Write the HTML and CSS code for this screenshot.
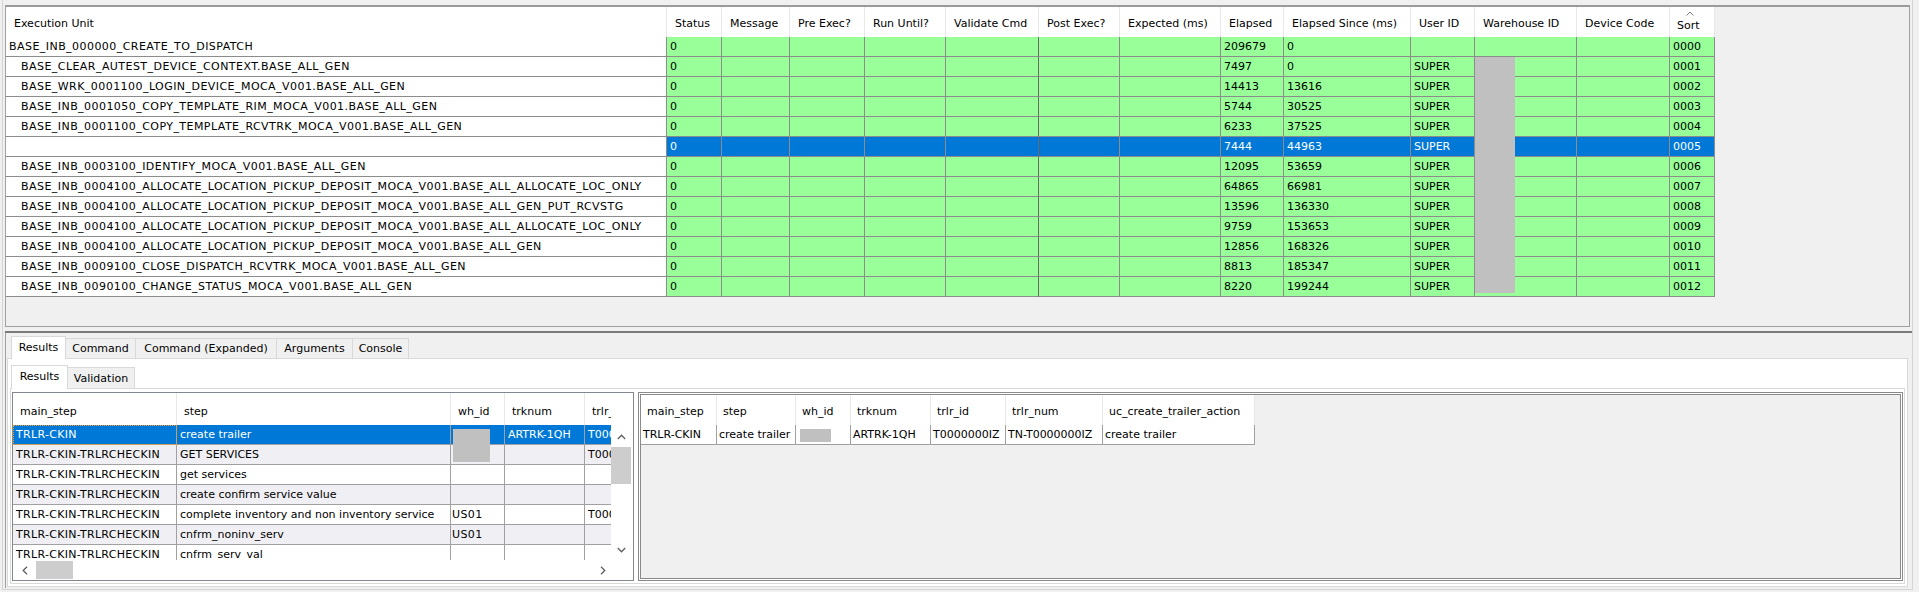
FILE: index.html
```html
<!DOCTYPE html>
<html>
<head>
<meta charset="utf-8">
<title>Execution Units</title>
<link rel="stylesheet" href="styles.css">
</head>
<body>
<div class="window">
<div class="frame">

  <div class="top-panel">
    <div class="trow thead">
      <div class="th">Execution Unit</div>
      <div class="th">Status</div>
      <div class="th">Message</div>
      <div class="th">Pre Exec?</div>
      <div class="th">Run Until?</div>
      <div class="th">Validate Cmd</div>
      <div class="th">Post Exec?</div>
      <div class="th">Expected (ms)</div>
      <div class="th">Elapsed</div>
      <div class="th">Elapsed Since (ms)</div>
      <div class="th">User ID</div>
      <div class="th">Warehouse ID</div>
      <div class="th">Device Code</div>
      <div class="th th-sort"><span class="caret"><svg width="8" height="5" viewBox="0 0 8 5"><polyline points="0.5,4.5 4,1 7.5,4.5" fill="none" stroke="#7a7a7a" stroke-width="1"/></svg></span><span>Sort</span></div>
    </div>

    <div class="trow data">
      <div class="td exec root">BASE_INB_000000_CREATE_TO_DISPATCH</div>
      <div class="td">0</div><div class="td"></div><div class="td"></div><div class="td"></div><div class="td"></div><div class="td"></div><div class="td"></div>
      <div class="td">209679</div><div class="td">0</div><div class="td"></div><div class="td"></div><div class="td"></div><div class="td">0000</div>
    </div>
    <div class="trow data">
      <div class="td exec">BASE_CLEAR_AUTEST_DEVICE_CONTEXT.BASE_ALL_GEN</div>
      <div class="td">0</div><div class="td"></div><div class="td"></div><div class="td"></div><div class="td"></div><div class="td"></div><div class="td"></div>
      <div class="td">7497</div><div class="td">0</div><div class="td">SUPER</div><div class="td"></div><div class="td"></div><div class="td">0001</div>
    </div>
    <div class="trow data">
      <div class="td exec">BASE_WRK_0001100_LOGIN_DEVICE_MOCA_V001.BASE_ALL_GEN</div>
      <div class="td">0</div><div class="td"></div><div class="td"></div><div class="td"></div><div class="td"></div><div class="td"></div><div class="td"></div>
      <div class="td">14413</div><div class="td">13616</div><div class="td">SUPER</div><div class="td"></div><div class="td"></div><div class="td">0002</div>
    </div>
    <div class="trow data">
      <div class="td exec">BASE_INB_0001050_COPY_TEMPLATE_RIM_MOCA_V001.BASE_ALL_GEN</div>
      <div class="td">0</div><div class="td"></div><div class="td"></div><div class="td"></div><div class="td"></div><div class="td"></div><div class="td"></div>
      <div class="td">5744</div><div class="td">30525</div><div class="td">SUPER</div><div class="td"></div><div class="td"></div><div class="td">0003</div>
    </div>
    <div class="trow data">
      <div class="td exec">BASE_INB_0001100_COPY_TEMPLATE_RCVTRK_MOCA_V001.BASE_ALL_GEN</div>
      <div class="td">0</div><div class="td"></div><div class="td"></div><div class="td"></div><div class="td"></div><div class="td"></div><div class="td"></div>
      <div class="td">6233</div><div class="td">37525</div><div class="td">SUPER</div><div class="td"></div><div class="td"></div><div class="td">0004</div>
    </div>
    <div class="trow data sel">
      <div class="td exec"></div>
      <div class="td">0</div><div class="td"></div><div class="td"></div><div class="td"></div><div class="td"></div><div class="td"></div><div class="td"></div>
      <div class="td">7444</div><div class="td">44963</div><div class="td">SUPER</div><div class="td"></div><div class="td"></div><div class="td">0005</div>
    </div>
    <div class="trow data">
      <div class="td exec">BASE_INB_0003100_IDENTIFY_MOCA_V001.BASE_ALL_GEN</div>
      <div class="td">0</div><div class="td"></div><div class="td"></div><div class="td"></div><div class="td"></div><div class="td"></div><div class="td"></div>
      <div class="td">12095</div><div class="td">53659</div><div class="td">SUPER</div><div class="td"></div><div class="td"></div><div class="td">0006</div>
    </div>
    <div class="trow data">
      <div class="td exec">BASE_INB_0004100_ALLOCATE_LOCATION_PICKUP_DEPOSIT_MOCA_V001.BASE_ALL_ALLOCATE_LOC_ONLY</div>
      <div class="td">0</div><div class="td"></div><div class="td"></div><div class="td"></div><div class="td"></div><div class="td"></div><div class="td"></div>
      <div class="td">64865</div><div class="td">66981</div><div class="td">SUPER</div><div class="td"></div><div class="td"></div><div class="td">0007</div>
    </div>
    <div class="trow data">
      <div class="td exec">BASE_INB_0004100_ALLOCATE_LOCATION_PICKUP_DEPOSIT_MOCA_V001.BASE_ALL_GEN_PUT_RCVSTG</div>
      <div class="td">0</div><div class="td"></div><div class="td"></div><div class="td"></div><div class="td"></div><div class="td"></div><div class="td"></div>
      <div class="td">13596</div><div class="td">136330</div><div class="td">SUPER</div><div class="td"></div><div class="td"></div><div class="td">0008</div>
    </div>
    <div class="trow data">
      <div class="td exec">BASE_INB_0004100_ALLOCATE_LOCATION_PICKUP_DEPOSIT_MOCA_V001.BASE_ALL_ALLOCATE_LOC_ONLY</div>
      <div class="td">0</div><div class="td"></div><div class="td"></div><div class="td"></div><div class="td"></div><div class="td"></div><div class="td"></div>
      <div class="td">9759</div><div class="td">153653</div><div class="td">SUPER</div><div class="td"></div><div class="td"></div><div class="td">0009</div>
    </div>
    <div class="trow data">
      <div class="td exec">BASE_INB_0004100_ALLOCATE_LOCATION_PICKUP_DEPOSIT_MOCA_V001.BASE_ALL_GEN</div>
      <div class="td">0</div><div class="td"></div><div class="td"></div><div class="td"></div><div class="td"></div><div class="td"></div><div class="td"></div>
      <div class="td">12856</div><div class="td">168326</div><div class="td">SUPER</div><div class="td"></div><div class="td"></div><div class="td">0010</div>
    </div>
    <div class="trow data">
      <div class="td exec">BASE_INB_0009100_CLOSE_DISPATCH_RCVTRK_MOCA_V001.BASE_ALL_GEN</div>
      <div class="td">0</div><div class="td"></div><div class="td"></div><div class="td"></div><div class="td"></div><div class="td"></div><div class="td"></div>
      <div class="td">8813</div><div class="td">185347</div><div class="td">SUPER</div><div class="td"></div><div class="td"></div><div class="td">0011</div>
    </div>
    <div class="trow data">
      <div class="td exec">BASE_INB_0090100_CHANGE_STATUS_MOCA_V001.BASE_ALL_GEN</div>
      <div class="td">0</div><div class="td"></div><div class="td"></div><div class="td"></div><div class="td"></div><div class="td"></div><div class="td"></div>
      <div class="td">8220</div><div class="td">199244</div><div class="td">SUPER</div><div class="td"></div><div class="td"></div><div class="td">0012</div>
    </div>

    <div class="redact redact-top"></div>
  </div>

  <div class="splitter"></div>

  <div class="bottom">
    <div class="tabstrip">
      <div class="tab active tab-results">Results</div>
      <div class="tab tab-command">Command</div>
      <div class="tab tab-expanded">Command (Expanded)</div>
      <div class="tab tab-arguments">Arguments</div>
      <div class="tab tab-console">Console</div>
    </div>

    <div class="tabpage">
      <div class="subtabstrip">
        <div class="tab sub active subtab-results">Results</div>
        <div class="tab sub subtab-validation">Validation</div>
      </div>

      <div class="subpage">
        <div class="lpanel">
          <div class="lbody">
            <div class="lview">
              <div class="lrow lhead">
                <div class="lh">main_step</div>
                <div class="lh">step</div>
                <div class="lh">wh_id</div>
                <div class="lh">trknum</div>
                <div class="lh">trlr_id</div>
              </div>
              <div class="lrow lsel">
                <div class="lc caps focus">TRLR-CKIN</div>
                <div class="lc">create trailer</div>
                <div class="lc"></div>
                <div class="lc">ARTRK-1QH</div>
                <div class="lc">T0000000IZ</div>
              </div>
              <div class="lrow alt">
                <div class="lc caps">TRLR-CKIN-TRLRCHECKIN</div>
                <div class="lc">GET SERVICES</div>
                <div class="lc"></div>
                <div class="lc"></div>
                <div class="lc">T0000000IZ</div>
              </div>
              <div class="lrow">
                <div class="lc caps">TRLR-CKIN-TRLRCHECKIN</div>
                <div class="lc">get services</div>
                <div class="lc"></div>
                <div class="lc"></div>
                <div class="lc"></div>
              </div>
              <div class="lrow alt">
                <div class="lc caps">TRLR-CKIN-TRLRCHECKIN</div>
                <div class="lc">create confirm service value</div>
                <div class="lc"></div>
                <div class="lc"></div>
                <div class="lc"></div>
              </div>
              <div class="lrow">
                <div class="lc caps">TRLR-CKIN-TRLRCHECKIN</div>
                <div class="lc">complete inventory and non inventory service</div>
                <div class="lc tight">US01</div>
                <div class="lc"></div>
                <div class="lc">T0000000IZ</div>
              </div>
              <div class="lrow alt">
                <div class="lc caps">TRLR-CKIN-TRLRCHECKIN</div>
                <div class="lc">cnfrm_noninv_serv</div>
                <div class="lc tight">US01</div>
                <div class="lc"></div>
                <div class="lc"></div>
              </div>
              <div class="lrow">
                <div class="lc caps">TRLR-CKIN-TRLRCHECKIN</div>
                <div class="lc">cnfrm_serv_val</div>
                <div class="lc"></div>
                <div class="lc"></div>
                <div class="lc"></div>
              </div>
              <div class="redact redact-left"></div>
            </div>
            <div class="vscroll">
              <div class="vs-head"></div>
              <div class="vs-track">
                <div class="vs-arrow"><svg width="9" height="6" viewBox="0 0 9 6"><polyline points="0.8,5 4.5,1.2 8.2,5" fill="none" stroke="#606060" stroke-width="1.3"/></svg></div>
                <div class="vs-thumb"></div>
                <div class="vs-fill"></div>
                <div class="vs-arrow"><svg width="9" height="6" viewBox="0 0 9 6"><polyline points="0.8,1 4.5,4.8 8.2,1" fill="none" stroke="#606060" stroke-width="1.3"/></svg></div>
              </div>
            </div>
          </div>
          <div class="hscroll">
            <div class="hs-arrow"><svg width="6" height="9" viewBox="0 0 6 9"><polyline points="5,0.8 1.2,4.5 5,8.2" fill="none" stroke="#606060" stroke-width="1.3"/></svg></div>
            <div class="hs-thumb"></div>
            <div class="hs-fill"></div>
            <div class="hs-arrow"><svg width="6" height="9" viewBox="0 0 6 9"><polyline points="1,0.8 4.8,4.5 1,8.2" fill="none" stroke="#606060" stroke-width="1.3"/></svg></div>
            <div class="hs-corner"></div>
          </div>
        </div>

        <div class="rpanel">
          <div class="rp-inner">
            <div class="rrow rhead">
              <div class="rh">main_step</div>
              <div class="rh">step</div>
              <div class="rh">wh_id</div>
              <div class="rh">trknum</div>
              <div class="rh">trlr_id</div>
              <div class="rh">trlr_num</div>
              <div class="rh">uc_create_trailer_action</div>
            </div>
            <div class="rrow">
              <div class="rc">TRLR-CKIN</div>
              <div class="rc">create trailer</div>
              <div class="rc"></div>
              <div class="rc">ARTRK-1QH</div>
              <div class="rc">T0000000IZ</div>
              <div class="rc">TN-T0000000IZ</div>
              <div class="rc">create trailer</div>
            </div>
            <div class="redact redact-right"></div>
          </div>
        </div>
      </div>
    </div>
  </div>

</div>
</div>
</body>
</html>
```

FILE: styles.css
```css
* { box-sizing: border-box; }
html, body { margin: 0; padding: 0; }
body {
  background: #f0f0f0;
  font-family: "DejaVu Sans", "Liberation Sans", sans-serif;
  font-size: 11px;
  color: #000;
}

.window {
  width: 1919px;
  height: 592px;
  padding: 0 6px 0 2px;
  overflow: hidden;
}
.frame {
  height: 590px;
  padding: 5px 2px 1px 2px;
  border-left: 1px solid #d4d4d4;
  border-right: 1px solid #d4d4d4;
  border-bottom: 1px solid #d4d4d4;
  display: flex;
  flex-direction: column;
}

/* ---------- top grid ---------- */
.top-panel {
  position: relative;
  flex: none;
  height: 322px;
  border: 1px solid #a0a0a0;
  border-top: 2px solid #9a9a9a;
  background: #f0f0f0;
  overflow: hidden;
}
.trow {
  display: grid;
  grid-template-columns: 661px 55px 68px 75px 81px 93px 81px 101px 63px 127px 64px 102px 93px 45px;
  height: 20px;
}
.thead { height: 30px; }
.th {
  background: #fff;
  border-right: 1px solid #e8e8e8;
  padding: 4px 0 0 8px;
  line-height: 26px;
  white-space: nowrap;
  overflow: hidden;
}
.th-sort {
  padding: 0 0 0 7px;
  display: flex;
  flex-direction: column;
  line-height: 20px;
}
.caret {
  height: 9px;
  display: flex;
  align-items: flex-end;
  padding-left: 9px;
}
.td {
  background: #99ff99;
  border-right: 1px solid #8c8c8c;
  border-bottom: 1px solid #8c8c8c;
  padding: 0 3px;
  line-height: 19px;
  white-space: nowrap;
  overflow: hidden;
}
.data .td:nth-child(6) { border-right-color: #6a6a6a; }
.td.exec {
  background: #fff;
  padding-left: 15px;
  letter-spacing: 0.45px;
}
.td.exec.root { padding-left: 3px; }
.sel .td { background: #0078d7; color: #fff; }
.sel .td.exec { background: #fff; }

.redact { position: absolute; background: #c0c0c0; }
.redact-top { left: 1469px; top: 50px; width: 40px; height: 236px; }

.splitter {
  flex: none;
  height: 2px;
  margin: 4px -2px 0 0;
  background: #7a7a7a;
}

/* ---------- bottom / tabs ---------- */
.bottom {
  flex: 1;
  border-left: 1px solid #a0a0a0;
  display: flex;
  flex-direction: column;
}
.tabstrip {
  flex: none;
  height: 25px;
  display: flex;
  align-items: flex-end;
  padding-left: 5px;
}
.tab {
  height: 20px;
  line-height: 20px;
  text-align: center;
  white-space: nowrap;
  background: #f0f0f0;
  border: 1px solid #d9d9d9;
  border-left: none;
  border-bottom: none;
}
.tab.active {
  height: 23px;
  line-height: 18px;
  padding-top: 2px;
  background: #fff;
  border-left: 1px solid #d9d9d9;
  margin-bottom: -1px;
  position: relative;
  z-index: 1;
}
.tab-results { width: 55px; }
.tab-command { width: 70px; }
.tab-expanded { width: 141px; }
.tab-arguments { width: 76px; }
.tab-console { width: 56px; }

.tabpage {
  flex: none;
  height: 229px;
  margin: 0 2px 0 1px;
  border: 1px solid #d9d9d9;
  background: #fff;
  display: flex;
  flex-direction: column;
}
.subtabstrip {
  flex: none;
  height: 29px;
  display: flex;
  align-items: flex-end;
  padding-left: 3px;
}
.tab.sub { height: 21px; line-height: 21px; }
.tab.sub.active { height: 24px; line-height: 20px; padding-top: 1px; }
.subtab-results { width: 57px; }
.subtab-validation { width: 67px; }

.subpage {
  flex: none;
  height: 196px;
  margin: 0 2px 2px 2px;
  border: 1px solid #d9d9d9;
  padding: 3px 1px 2px 1px;
  display: flex;
  gap: 4px;
}

/* ---------- left result grid ---------- */
.lpanel {
  flex: none;
  width: 622px;
  border: 1px solid #828790;
  background: #fff;
  display: flex;
  flex-direction: column;
}
.lbody { height: 167px; display: flex; }
.lview {
  position: relative;
  width: 598px;
  overflow: hidden;
}
.lrow {
  display: grid;
  grid-template-columns: 164px 274px 54px 80px 80px;
  height: 20px;
  width: 652px;
}
.lhead { height: 32px; }
.lh {
  background: #fff;
  border-right: 1px solid #e8e8e8;
  padding: 6px 0 0 7px;
  line-height: 26px;
  white-space: nowrap;
  overflow: hidden;
}
.lc {
  border-right: 1px solid #a0a0a0;
  border-bottom: 1px solid #a0a0a0;
  padding: 0 3px;
  line-height: 19px;
  white-space: nowrap;
  overflow: hidden;
}
.lc.caps { letter-spacing: 0.3px; }
.lc.tight { padding-left: 1px; letter-spacing: 0.4px; }
.lrow.alt .lc { background: #f0f0f4; }
.lsel .lc { background: #0078d7; color: #fff; }
.lc.focus { outline: 1px dotted #ff9a1f; outline-offset: -1px; }
.redact-left { left: 440px; top: 36px; width: 37px; height: 33px; }

.vscroll {
  width: 22px;
  display: flex;
  flex-direction: column;
  padding-right: 2px;
}
.vs-head { height: 32px; flex: none; }
.vs-track {
  flex: 1;
  display: flex;
  flex-direction: column;
  padding-bottom: 2px;
}
.vs-arrow {
  height: 20px;
  flex: none;
  display: flex;
  align-items: center;
  justify-content: center;
  padding-top: 4px;
}
.vs-thumb {
  flex: none;
  height: 37px;
  margin-top: 2px;
  background: #cdcdcd;
}
.vs-fill { flex: 1; }

.hscroll {
  height: 20px;
  display: flex;
  align-items: center;
}
.hs-arrow {
  width: 20px;
  height: 18px;
  flex: none;
  display: flex;
  align-items: center;
  justify-content: center;
  padding-left: 4px;
}
.hs-thumb {
  flex: none;
  width: 37px;
  height: 18px;
  margin-left: 3px;
  background: #cdcdcd;
}
.hs-fill { flex: 1; }
.hs-corner { width: 22px; flex: none; }

/* ---------- right result grid ---------- */
.rpanel {
  flex: 1;
  border: 1px solid #8a8a8a;
  padding: 1px;
  background: #fff;
}
.rp-inner {
  position: relative;
  height: 100%;
  border: 1px solid #8a8a8a;
  background: #f0f0f0;
}
.rrow {
  display: grid;
  grid-template-columns: 76px 79px 55px 80px 75px 97px 152px;
  width: 614px;
  height: 20px;
}
.rhead { height: 30px; }
.rh {
  background: #fff;
  border-right: 1px solid #e8e8e8;
  padding: 4px 0 0 6px;
  line-height: 26px;
  white-space: nowrap;
  overflow: hidden;
}
.rc {
  background: #fff;
  border-right: 1px solid #a0a0a0;
  border-bottom: 1px solid #a0a0a0;
  padding: 0 2px;
  line-height: 19px;
  white-space: nowrap;
  overflow: hidden;
}
.redact-right { left: 159px; top: 34px; width: 31px; height: 13px; }
```
